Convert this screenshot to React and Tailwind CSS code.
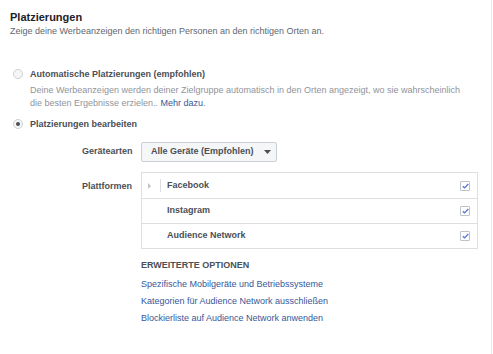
import React from 'react'

const platforms = [
  { name: 'Facebook', expandable: true },
  { name: 'Instagram' },
  { name: 'Audience Network' },
]

const links = [
  'Spezifische Mobilgeräte und Betriebssysteme',
  'Kategorien für Audience Network ausschließen',
  'Blockierliste auf Audience Network anwenden',
]

function Radio({ checked }) {
  return (
    <span className="w-[10px] h-[10px] rounded-full border border-[#ccd0d5] bg-[#f5f6f7] flex items-center justify-center shrink-0">
      {checked && <span className="w-[4px] h-[4px] rounded-full bg-[#4b4f56]" />}
    </span>
  )
}

function Checkbox() {
  return (
    <span className="w-[10px] h-[10px] border border-[#bec3c9] rounded-[1px] bg-white flex items-center justify-center">
      <svg width="7" height="6" viewBox="0 0 7 6">
        <path d="M0.8 3.4 L2.6 4.9 L6.3 0.9" fill="none" stroke="#5b7bd5" strokeWidth="1.4" />
      </svg>
    </span>
  )
}

export default function App() {
  return (
    <div
      className="w-[492px] h-[354px] bg-white border-r border-[#e9eaed] px-[10px] pt-[10px] text-[#4b4f56]"
      style={{ fontFamily: '"Liberation Sans", Arial, sans-serif' }}
    >
      <div className="text-[11px] leading-[14px] font-bold text-[#1d2129]">Platzierungen</div>
      <div className="text-[9px] leading-[14px] text-[#606770]">
        Zeige deine Werbeanzeigen den richtigen Personen an den richtigen Orten an.
      </div>

      <div className="mt-[29px] pl-[3px]">
        <div className="flex items-center gap-[7px]">
          <Radio />
          <span className="text-[9px] leading-[14px] font-bold">Automatische Platzierungen (empfohlen)</span>
        </div>
        <div className="ml-[17px] mt-[3px] text-[9px] leading-[13px] text-[#90949c] whitespace-nowrap">
          Deine Werbeanzeigen werden deiner Zielgruppe automatisch in den Orten angezeigt, wo sie wahrscheinlich
          <br />
          die besten Ergebnisse erzielen.. <span className="text-[#365899]">Mehr dazu</span>.
        </div>

        <div className="flex items-center gap-[7px] mt-[7px]">
          <Radio checked />
          <span className="text-[9px] leading-[14px] font-bold">Platzierungen bearbeiten</span>
        </div>
      </div>

      <div className="ml-[72px] mt-[11px]">
        <div className="flex items-center">
          <div className="w-[59px] text-[9px] font-bold">Gerätearten</div>
          <button className="h-[20px] w-[136px] border border-[#ccd0d5] rounded-[2px] bg-[#f5f6f7] flex items-center pl-[9px] gap-[10px] text-[9px] font-bold text-[#4b4f56] whitespace-nowrap">
            Alle Geräte (Empfohlen)
            <svg width="7" height="4" viewBox="0 0 7 4">
              <path d="M0 0 H7 L3.5 4 Z" fill="#4b4f56" />
            </svg>
          </button>
        </div>

        <div className="flex mt-[10px]">
          <div className="w-[59px] text-[9px] leading-[14px] font-bold pt-[7px]">Plattformen</div>
          <div className="w-[337px] border border-[#dddfe2]">
            {platforms.map((p, i) => (
              <div
                key={p.name}
                className={'h-[25px] flex items-center pr-[7px] ' + (i > 0 ? 'border-t border-[#dddfe2]' : '')}
              >
                <div className="w-[14px] h-[13px] mr-[4px] flex items-center justify-center">
                  {p.expandable && (
                    <svg width="3" height="6" viewBox="0 0 3 6">
                      <path d="M0 0 L3 3 L0 6 Z" fill="#bec3c9" />
                    </svg>
                  )}
                </div>
                <div className={'h-[13px] ' + (p.expandable ? 'border-l border-[#dddfe2]' : 'border-l border-transparent')} />
                <span className="ml-[6px] text-[9px] font-bold">{p.name}</span>
                <span className="ml-auto">
                  <Checkbox />
                </span>
              </div>
            ))}
          </div>
        </div>

        <div className="ml-[59px] mt-[9px]">
          <div className="text-[9px] font-bold uppercase leading-[14px]">Erweiterte Optionen</div>
          <div className="mt-[5px] flex flex-col gap-[3px] text-[9px] leading-[14px] text-[#365899]">
            {links.map(l => (
              <a key={l} href="#" className="block">{l}</a>
            ))}
          </div>
        </div>
      </div>
    </div>
  )
}
